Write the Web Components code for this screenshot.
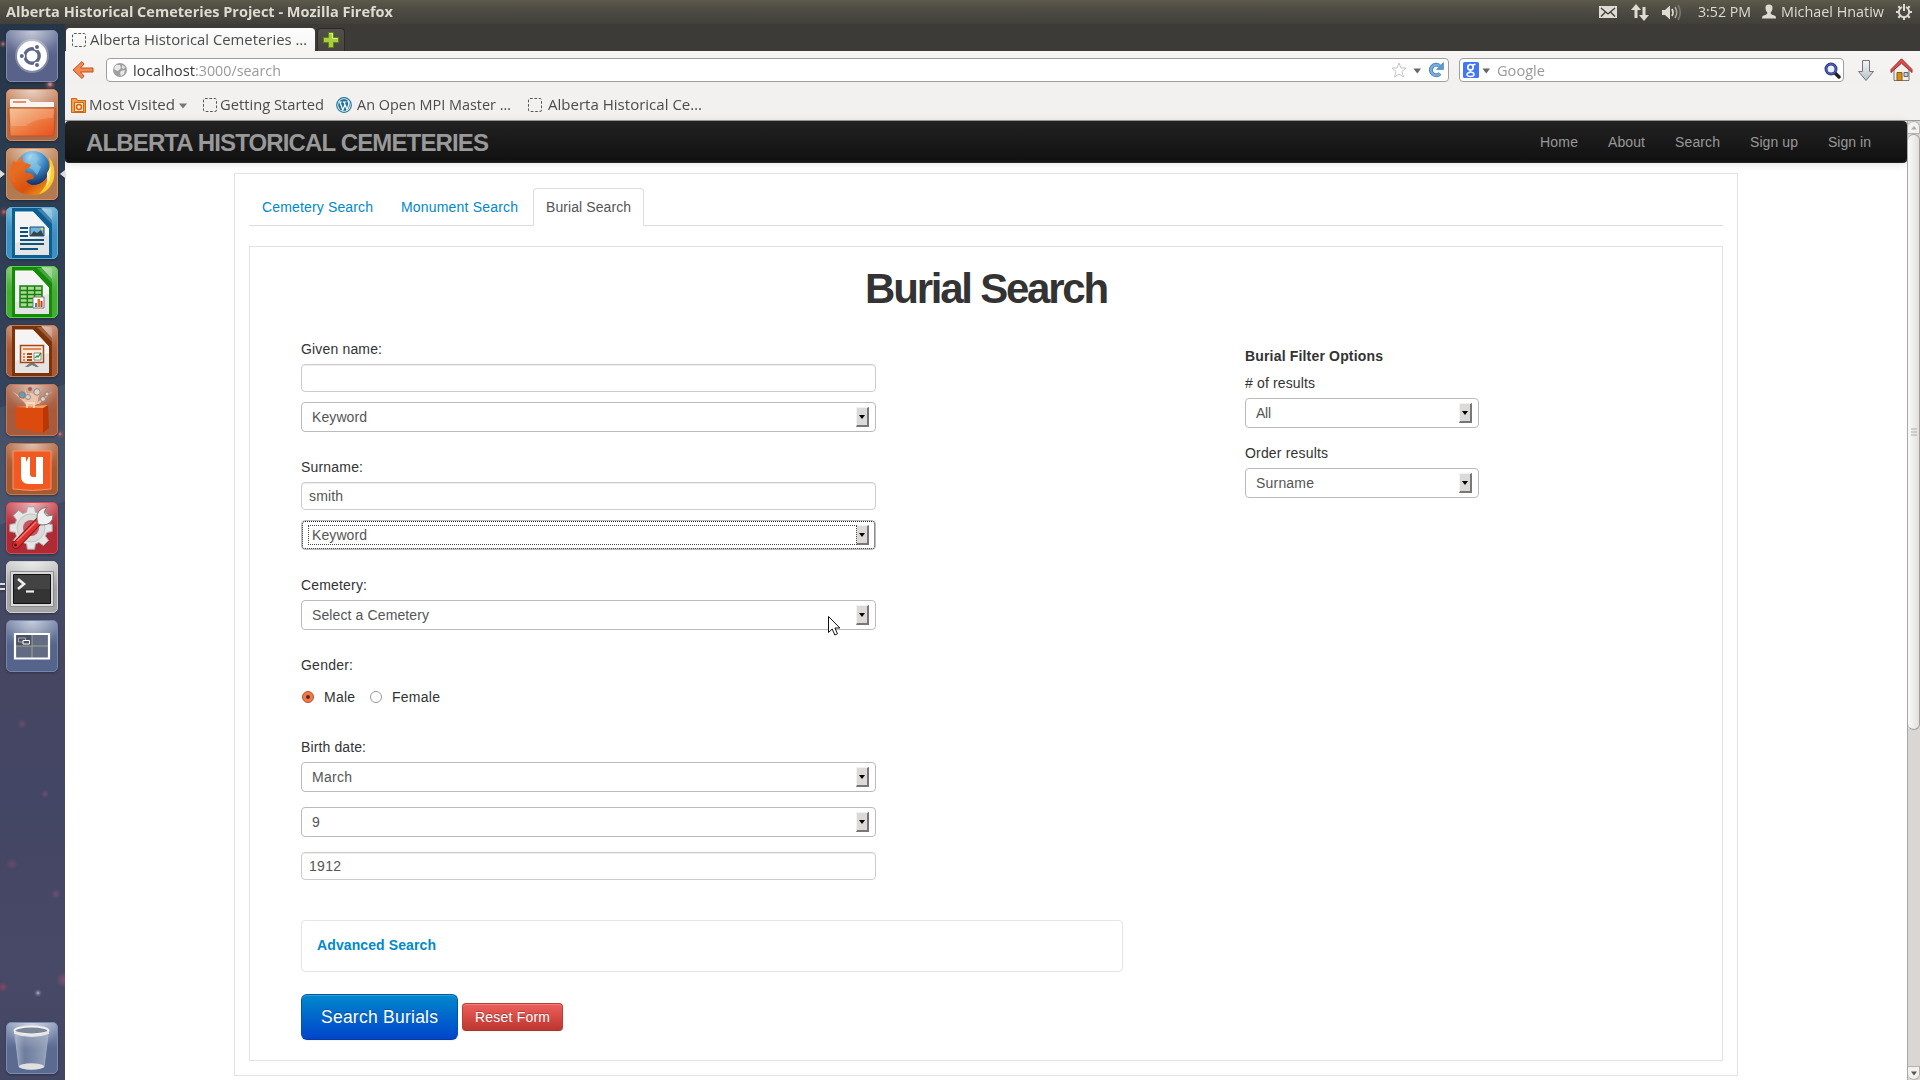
<!DOCTYPE html>
<html lang="en">
<head>
<meta charset="utf-8">
<title>Alberta Historical Cemeteries Project</title>
<style>
html,body{margin:0;height:100%;overflow:hidden;background:#fff}
</style>
</head>
<body>
<desktop-screen></desktop-screen>
<script>
const define = (name, html, ready) => {
  const tpl = document.createElement('template');
  tpl.innerHTML = html;
  customElements.define(name, class extends HTMLElement {
    connectedCallback() {
      if (this.shadowRoot) return;
      this.attachShadow({mode: 'open'}).append(tpl.content.cloneNode(true));
      if (ready) ready(this, this.shadowRoot);
    }
  });
};

/* Text run of a given width: letter spacing by default, horizontal scale with "scale". */
define('fit-text', `<style>:host{display:inline-block;white-space:pre;flex:none}span{display:inline-block;transform-origin:0 50%}</style><span><slot></slot></span>`, (el, root) => {
  const span = root.querySelector('span'), w = +el.getAttribute('w');
  const nat = span.getBoundingClientRect().width;
  if (!w || !nat) return;
  el.style.width = w + 'px';
  if (el.hasAttribute('scale')) { span.style.transform = `scaleX(${w / nat})`; span.style.marginRight = (w - nat) + 'px'; }
  else span.style.letterSpacing = (w - nat) / (el.textContent.length - 1) + 'px';
});

/* ---------- launcher ---------- */
const tile = (id, a, b, edge) => `<defs><linearGradient id="${id}" x2="0" y2="1"><stop offset="0" stop-color="${a}"/><stop offset=".5" stop-color="${b}"/><stop offset="1" stop-color="${b}"/></linearGradient><radialGradient id="s${id}" cx=".5" cy="0" r=".55"><stop offset="0" stop-color="#fff" stop-opacity=".55"/><stop offset="1" stop-color="#fff" stop-opacity="0"/></radialGradient></defs><rect x=".5" y=".5" width="51" height="51" rx="4.5" fill="url(#${id})" stroke="${edge}"/><rect x="1" y="1" width="50" height="50" rx="4" fill="url(#s${id})"/>`;
const doc = (c, inner) => `<path d="M6 1h29l11 12v38H6z" fill="${c}"/><path d="M31 2l15 15V4q0-2-2-2z" fill="#fff" opacity=".22"/><path d="M9 5h18l16 17v26H9z" fill="#f4f4f4"/><path d="M9 5h18l16 17" fill="none" stroke="#fff"/><path d="M9 36l34-8v20H9z" fill="#d8d8d8" opacity=".6"/>${inner}`;
const gearPath = (() => {
  let d = '';
  for (let i = 0; i < 8; i++) {
    const a = i * Math.PI / 4 - .17, p = (r, t) => (25 + r * Math.cos(t)).toFixed(1) + ' ' + (26 + r * Math.sin(t)).toFixed(1);
    d += (i ? 'L' : 'M') + p(16.5, a - .1) + 'L' + p(21.5, a) + 'L' + p(21.5, a + .34) + 'L' + p(16.5, a + .44);
  }
  return d + 'z';
})();
const icons = {
  dash: tile('d', '#7d87a8', '#59638a', '#7f8bb0') + `<circle cx="26" cy="26" r="17" fill="#fff" opacity=".25"/><circle cx="26" cy="26" r="15" fill="#fff"/><circle cx="26" cy="26" r="7.2" fill="none" stroke="#5d6789" stroke-width="3.4"/><g fill="#5d6789" stroke="#fff" stroke-width="1.2"><circle cx="15.8" cy="26" r="2.6"/><circle cx="31" cy="17.1" r="2.6"/><circle cx="31" cy="34.9" r="2.6"/></g>`,
  files: tile('f', '#d29a78', '#b16a48', '#d78a5c') + `<defs><linearGradient id="ff" x2="1" y2="1"><stop offset="0" stop-color="#f3b883"/><stop offset=".5" stop-color="#ee8046"/><stop offset="1" stop-color="#e84f1c"/></linearGradient></defs><path d="M4 18v-7q0-1 1-1h17l3 3h22q1 0 1 1v4z" fill="#f8f4f2"/><path d="M7 12h13v2H7z" fill="#ee8e66"/><path d="M3 19h46l-1 27q0 1-1 1H5q-1 0-1-1z" fill="url(#ff)" stroke="#b65024" stroke-width=".8"/><path d="M4 20h44l-1 9q-20 1-27 8H5z" fill="#fff" opacity=".17"/>`,
  fox: tile('x', '#c68e66', '#b17a50', '#d39164') + `<defs><radialGradient id="gb" cx=".45" cy=".2" r=".8"><stop offset="0" stop-color="#b7e0f4"/><stop offset=".5" stop-color="#3c8bc5"/><stop offset="1" stop-color="#132f66"/></radialGradient><linearGradient id="fx" x2="1" y2="1"><stop offset="0" stop-color="#f08030"/><stop offset=".6" stop-color="#d8520f"/><stop offset="1" stop-color="#f7b91f"/></linearGradient></defs><circle cx="27" cy="20" r="17" fill="url(#gb)"/><path d="M27 7l6 3-3 5 5 4-4 8-5-6-5-2 2-7z" fill="#85c4e6" opacity=".7"/><path d="M43 10q7 9 5 20c-2 12-12 18-22 17-14 0-23-9-23-21 0-6 3-11 5-14l1 4q2-5 8-7-1 4 1 6 4 0 7 2-1 3-5 4-2 2 0 4 3-1 6 1 3 2 1 5-4 0-7 2 6 7 14 3 8-5 9-14 1-6 0-12z" fill="url(#fx)"/><path d="M43 9q7 9 5 21c-2 8-8 14-15 16 6-6 9-12 9-20 2-5 2-10 1-17z" fill="#f9cd34"/><path d="M41 25l4-7-1 14-4 7 1-5z" fill="#fff0a0"/><path d="M7 13q4 3 12 1l-9 10q-4 5 1 12-7-5-7-13 1-6 3-10z" fill="#e96b23"/>`,
  writer: tile('w', '#68aed2', '#3e8fbf', '#5cb0df') + doc('#0b5f93', `<g stroke="#10527f" stroke-width="2"><path d="M14 21h8M14 25h8M14 29h8M14 33h24M14 37h24M14 42h18"/></g><path d="M24 20h14v9H24z" fill="#73b5dc" stroke="#10527f"/><path d="M24 29l4-5 3 2 4-3 3 6z" fill="#36464e"/><circle cx="36" cy="22" r="1.2" fill="#f6d743"/>`),
  calc: tile('c', '#7cc46e', '#46ab35', '#5bd14c') + doc('#148b08', `<path d="M14 20h22v21H14z" fill="#a9dc91"/><path d="M14 20h22v21H14zM14 24.500h22M14 28.500h22M14 32.500h22M14 36.500h22M21.300 20v21M28.600 20v21" fill="none" stroke="#1a7d13" stroke-width="1.500"/><path d="M27 31h11v11H27z" fill="#fff" stroke="#777"/><path d="M29 37h2v4h-2z" fill="#2688c9"/><path d="M31.500 33h2.500v8h-2.500z" fill="#e96c1b"/><path d="M34.500 35h2v6h-2z" fill="#c63c14"/>`),
  impress: tile('i', '#c28568', '#a65a37', '#cb7b50') + doc('#7e3207', `<path d="M14.500 20.500h23v17h-23z" fill="#f8e7dc" stroke="#a4481a" stroke-width="1.500"/><path d="M17 23h18v2H17z" fill="#e7874f"/><g stroke="#a4481a" stroke-width="2"><path d="M21 29h5M21 32h5M21 35h5"/><path d="M17 29h2M17 32h2M17 35h2" stroke="#e7874f"/></g><path d="M28 28h7v7h-7z" fill="#fff" stroke="#888"/><path d="M29 33l2-2 1 1 3-4" fill="none" stroke="#219a2e" stroke-width="1.300"/><path d="M24 38h4l5 4h-3l-4-2-4 2h-3z" fill="#777"/>`),
  shop: tile('h', '#b2745a', '#a65b3d', '#c47a5a') + `<g fill="#f4cdb5" opacity=".85"><path d="M25 20L6 7l14 13zM26 20L18 3l5 17zM27 20l9-17-6 17zM29 20L47 7 33 20z"/><circle cx="25" cy="16" r="7"/></g><g fill="#d9d2cd" stroke="#8b756c" stroke-width=".8"><circle cx="16" cy="11" r="3.200" fill="#6d99b2"/><circle cx="31" cy="8" r="3.200"/><circle cx="41" cy="10" r="2"/><circle cx="24" cy="5" r="1.800" fill="#c43"/><circle cx="37" cy="15" r="2.500"/><circle cx="22" cy="13" r="2.500"/></g><path d="M9 23l33-2 1 23-6 5-27-5z" fill="#dd4a0e"/><path d="M37 49l6-5-1-23-5 3z" fill="#b93707"/><path d="M9 23l33-2-5 3z" fill="#f9a36c"/><path d="M21 24v-5h7v5" fill="none" stroke="#f7d9bb" stroke-width="1.800"/>`,
  one: tile('u', '#b8734e', '#a65a30', '#cb7747') + `<path d="M7 8h38v38q-18 3-38 0z" fill="#f05a22" stroke="#ff9366"/><path d="M15 14h9v17q0 3 3 3h3V14h7v27H23q-8 0-8-8z" fill="#fff"/><path d="M19.500 14h3l-2 5z" fill="#f05a22"/>`,
  settings: tile('g', '#cc5963', '#ae2b36', '#d24b56') + `<path d="${gearPath}" fill="#e6e6e6" stroke="#a9a9a9"/><circle cx="25" cy="26" r="14" fill="#dadada" stroke="#c4c4c4"/><circle cx="25" cy="26" r="8" fill="#c45460"/><path d="M10 43L34 18" stroke="#8d1414" stroke-width="8" stroke-linecap="round"/><path d="M10 43L34 18" stroke="#dd3030" stroke-width="6" stroke-linecap="round"/><path d="M11 39L30 20" stroke="#f37b72" stroke-width="1.500"/><circle cx="9.500" cy="43" r="1.500" fill="#6a0909"/><path d="M31 17q-1-10 10-12l-3 5 3 4 6-1q0 10-11 10l-4-1z" fill="#f1f1f1" stroke="#777"/>`,
  term: tile('t', '#d2d2d2', '#a5a5a5', '#cfcfcf') + `<path d="M4.500 10.500h43v35h-43z" fill="#d9d9d9" stroke="#8c8c8c"/><path d="M7.500 13.500h37v29h-37z" fill="#343434" stroke="#111"/><path d="M8 14h36v14H8z" fill="#fff" opacity=".08"/><path d="M12 18l6 5-6 5" fill="none" stroke="#eee" stroke-width="2.600"/><path d="M20 30.500h8" stroke="#eee" stroke-width="2.200"/>`,
  work: tile('k', '#8090b0', '#55648a', '#7486ab') + `<path d="M9 14.500h34v23H9z" fill="#626c82"/><path d="M9 14.500h17V26H9z" fill="#4a5164"/><path d="M26 14.500v23M9 26h34" stroke="#a5a193"/><path d="M9 14h34v24.500H9z" fill="none" stroke="#fff" stroke-width="2.200"/><path d="M12.500 18h7v4h-7z" fill="none" stroke="#aaa"/><path d="M17 20.500h6.500V24H17z" fill="#4a5164" stroke="#fff"/>`,
  trash: tile('r', '#93a1bf', '#5a6a91', '#7a8cb4') + `<defs><linearGradient id="tr"><stop offset="0" stop-color="#b9c2d2" stop-opacity=".8"/><stop offset=".3" stop-color="#8490aa" stop-opacity=".5"/><stop offset="1" stop-color="#a9b4c8" stop-opacity=".8"/></linearGradient></defs><path d="M9 13h33l-4 32q-13 4-25 0z" fill="url(#tr)" stroke="#aab4c8" stroke-width=".8"/><ellipse cx="25.500" cy="44.500" rx="12.500" ry="3.200" fill="#dfe0df"/><ellipse cx="25.500" cy="8.500" rx="17" ry="4" fill="#7c879b" stroke="#f1f1ef" stroke-width="2"/><path d="M8 9q17 7 35 0v3q-17 6-35 0z" fill="#e6e6e4"/>`
};
customElements.define('launcher-icon', class extends HTMLElement {
  connectedCallback() {
    if (this.shadowRoot) return;
    this.attachShadow({mode: 'open'}).innerHTML = `<style>:host{display:block;width:52px;height:52px;position:relative;margin-left:6px;filter:drop-shadow(0 1px 1px #0005)}svg{display:block}.l,.r{position:absolute;top:20px}.l{left:-6px}.r{left:53px}</style><svg width="52" height="52" viewBox="0 0 52 52">${icons[this.getAttribute('name')]}</svg>${
      this.hasAttribute('active') ? '<svg class="l" width="6" height="12"><path d="M0 2l5 4-5 4z" fill="#ddd"/></svg><svg class="r" width="6" height="12"><path d="M6 2L1 6l5 4z" fill="#ddd"/></svg>' : ''}${
      this.hasAttribute('running') ? '<svg class="l" width="6" height="12"><path d="M0 3h5M0 8h5" stroke="#ddd" stroke-width="2"/></svg>' : ''}`;
  }
});
define('side-launcher', `<style>
:host{display:flex;flex-direction:column;box-sizing:border-box;width:65px;height:1056px;padding-top:6px;padding-bottom:6px;gap:7px;
background:
radial-gradient(circle at 3px 20px,#b78 0,#a666 2px,transparent 4px),
radial-gradient(circle at 50px 60px,#eaa 0,#c666 3px,transparent 6px),
radial-gradient(circle at 4px 188px,#c66 0,#a444 3px,transparent 6px),
radial-gradient(circle at 60px 410px,#d88 0,#b555 2px,transparent 5px),
radial-gradient(circle at 38px 969px,#9cb7cc 0,#89a6 2px,transparent 4px),
radial-gradient(circle at 3px 963px,#a46a 0,transparent 5px),
radial-gradient(circle at 64px 956px,#b3568388 0,transparent 8px),
radial-gradient(circle at 22px 700px,#a4567966 0,transparent 5px),
radial-gradient(circle at 45px 770px,#b0608066 0,transparent 4px),
radial-gradient(circle at 12px 840px,#a0507066 0,transparent 6px),
radial-gradient(circle at 56px 870px,#a5608866 0,transparent 5px),
linear-gradient(160deg,transparent 0 360px,#ffffff10 361px 470px,transparent 471px),
linear-gradient(#263647 0,#2c3c50 140px,#34425a 350px,#434c66 520px,#474662 640px,#434664 760px,#454764 860px,#484966 940px,#424662 1056px)}
launcher-icon:last-child{margin-top:auto}
</style>
<launcher-icon name="dash"></launcher-icon><launcher-icon name="files"></launcher-icon><launcher-icon name="fox" active></launcher-icon><launcher-icon name="writer"></launcher-icon><launcher-icon name="calc"></launcher-icon><launcher-icon name="impress"></launcher-icon><launcher-icon name="shop"></launcher-icon><launcher-icon name="one"></launcher-icon><launcher-icon name="settings"></launcher-icon><launcher-icon name="term" running></launcher-icon><launcher-icon name="work"></launcher-icon><launcher-icon name="trash"></launcher-icon>`);

/* ---------- top panel ---------- */
define('top-panel', `<style>
:host{display:flex;align-items:center;height:24px;box-sizing:border-box;padding:0 7px 0 6px;background:linear-gradient(#5d5a4c 0,#504e44 8px,#403f3a 24px);color:#dfdbd2;font:15px/22px "Open Sans","Noto Sans",sans-serif}
fit-text{padding-bottom:2px}.t{font-weight:700;margin-right:auto}svg{flex:none}</style>
<fit-text class="t" w="387" scale>Alberta Historical Cemeteries Project - Mozilla Firefox</fit-text>
<svg width="18" height="24" style="margin-right:14px"><path d="M0 6h18v12H0z" fill="#dfdbd2"/><path d="M2 8l7 6 7-6M2 16.500l5-5M16 16.500l-5-5" stroke="#3c3b37" stroke-width="1.300" fill="none"/></svg>
<svg width="18" height="24" style="margin-right:13px"><path d="M5 4l5 6H6.500v8h-3v-8H0z" fill="#dfdbd2"/><path d="M13 21l-5-6h3.500V7h3v8H18z" fill="#dfdbd2"/></svg>
<svg width="21" height="24" style="margin-right:15px"><path d="M0 10h3l5-4.500v14L3 15H0z" fill="#dfdbd2"/><path d="M10 9q2 3.500 0 7" stroke="#dfdbd2" stroke-width="1.700" fill="none"/><path d="M13 7q3.500 5.500 0 11" stroke="#aaa69e" stroke-width="1.700" fill="none"/><path d="M16 5q4.500 7.500 0 15" stroke="#7b7972" stroke-width="1.600" fill="none"/></svg>
<fit-text w="53" scale>3:52 PM</fit-text>
<svg width="14" height="24" style="margin:0 5px 0 11px"><path d="M7 4.500c-2.500 0-3.800 1.500-3.500 4 .2 2 1 3.300 1.800 4q.2 1.500-1 2L.500 16Q0 18 0 18.500h14q0-1.500-.5-2.500l-3.800-1.500q-1.200-.500-1-2c.8-.7 1.600-2 1.800-4 .3-2.500-1-4-3.500-4z" fill="#dfdbd2"/></svg>
<fit-text w="103" scale>Michael Hnatiw</fit-text>
<svg width="18" height="24" viewBox="-9 -12 18 24" style="margin-left:11px"><path d="M-2-4.800A5.200 5.200 0 1 0 2-4.800M0-8v7" stroke="#dfdbd2" stroke-width="2" fill="none"/><path d="M-8 0h3M5 0h3M0 5v3M-5.700-5.700l2 2M5.700-5.700l-2 2M-5.700 5.700l2-2M5.700 5.700l-2-2" stroke="#dfdbd2" stroke-width="2"/></svg>`);

/* ---------- browser chrome ---------- */
define('dashed-icon', `<style>:host{display:block;flex:none;width:14px;height:14px}svg{display:block}</style><svg width="14" height="14"><rect x=".5" y=".5" width="13" height="13" rx="1.500" fill="none" stroke="#555" stroke-dasharray="2.700 1.700"/></svg>`);
define('tab-strip', `<style>
:host{display:flex;height:27px;box-sizing:border-box;align-items:flex-end;background:#3c3b37;padding-left:1px;gap:2px;font:14.500px/22px "Open Sans","Noto Sans",sans-serif;color:#4c4c4c}
.tab{display:flex;align-items:center;gap:4px;width:249px;height:23px;box-sizing:border-box;padding-left:6px;background:linear-gradient(#fdfdfd,#f5f4f3);border-radius:4px 4px 0 0}
.new{width:28px;height:23px;box-sizing:border-box;background:linear-gradient(#504f49,#45443f);border:1px solid #2c2b28;border-bottom:0;border-radius:4px 4px 0 0;display:flex;justify-content:center;align-items:center}</style>
<div class="tab"><dashed-icon></dashed-icon><fit-text w="217" scale>Alberta Historical Cemeteries …</fit-text></div>
<div class="new"><svg width="16" height="16"><path d="M5.500.500h5v5h5v5h-5v5h-5v-5h-5v-5h5z" fill="#a9cd3c" stroke="#5c8414"/><path d="M6.500 1.500h3v5h5" fill="none" stroke="#dcef9a"/></svg></div>`);
define('nav-toolbar', `<style>
:host{display:flex;align-items:center;height:33px;box-sizing:border-box;background:linear-gradient(#f6f5f4,#f1f0ef);padding:7px 6px 2px 7px;font:14.500px/22px "Open Sans","Noto Sans",sans-serif;color:#3c3c3c}
svg{flex:none;display:block}
.box{display:flex;align-items:center;height:24px;box-sizing:border-box;border:1px solid #a19f9b;border-radius:4px;background:#fff}
.box fit-text{padding-top:1px}
.url{width:1343px;margin-left:12px;padding:0 4px 0 6px}.srch{width:385px;margin-left:10px;padding:0 2px 0 3px}
.g{color:#999}</style>
<svg width="22" height="20"><path d="M10 1.500L1 10l9 8.500 2-2.500-3.500-4H21V8H8.500L12 4z" fill="#f08a4f" stroke="#c4501d" stroke-linejoin="round"/></svg>
<div class="box url"><svg width="14" height="14" style="margin-right:6px"><circle cx="7" cy="7" r="7" fill="#a0a0a0"/><path d="M3 2l4 0 1 3-3 3-3-1-1-2zM8 8l4-1-1 4-3 2-1-3zM9 2l3 2-1 2-2-1z" fill="#e8e8e8"/></svg><fit-text w="62" scale>localhost</fit-text><fit-text class="g" w="86" scale>:3000/search</fit-text>
<svg width="16" height="16" style="margin-left:auto"><path d="M8 1l2 5h5l-4 3.500 1.500 5.500L8 12l-4.500 3L5 9.500 1 6h5z" fill="#fff" stroke="#c5c5c5" stroke-linejoin="round"/></svg><svg width="9" height="6" style="margin:1px 6px 0"><path d="M.500.500h7.500L4.300 5.500z" fill="#666"/></svg><svg width="16" height="16"><path d="M12 11.500A5.200 5.200 0 1 1 11.500 4" fill="none" stroke="#3f7db8" stroke-width="4"/><path d="M12 11.500A5.200 5.200 0 1 1 11.500 4" fill="none" stroke="#78aedb" stroke-width="2.400"/><path d="M8.500 7.500H15.500V.500z" fill="#5a98cd" stroke="#3f7db8" stroke-width=".6"/></svg></div>
<div class="box srch"><svg width="16" height="16"><rect width="16" height="16" rx="1.500" fill="#4376f6"/><circle cx="7.500" cy="5.200" r="2.700" fill="none" stroke="#fff" stroke-width="1.700"/><path d="M8 8Q6 9 8 10q3 .500 3 2.500 0 2-3.500 2T4 12.500q0-2 3.500-2.300M9.500 3l3-.800" fill="none" stroke="#fff" stroke-width="1.400"/></svg><svg width="9" height="6" style="margin:1px 6px 0 3px"><path d="M.500.500h7.500L4.300 5.500z" fill="#666"/></svg><fit-text class="g" w="48" scale>Google</fit-text>
<svg width="17" height="17" style="margin-left:auto"><path d="M11 11l4 4" stroke="#222" stroke-width="3.500" stroke-linecap="round"/><circle cx="7" cy="7" r="5" fill="#e9f0f8" stroke="#2c3590" stroke-width="3"/><circle cx="7" cy="7" r="5" fill="none" stroke="#6f7fd0" stroke-width=".7"/></svg></div>
<svg width="18" height="23" style="margin-left:13px"><defs><linearGradient id="a" x2="0" y2="1"><stop offset="0" stop-color="#f4f4f4"/><stop offset="1" stop-color="#b8c2c8"/></linearGradient></defs><path d="M5.500 1.500h7v11h4L9 21.500 1.500 12.500h4z" fill="url(#a)" stroke="#777" stroke-linejoin="round"/></svg>
<svg width="23" height="24" style="margin-left:15px"><path d="M4 12v10.500h15V12l-7.500-7z" fill="#f0efeb" stroke="#777"/><path d="M7 14.500h5v8H7z" fill="#d68e1a" stroke="#8c5b0d"/><path d="M14 14.500h4v4h-4z" fill="#b8cfe3" stroke="#666"/><path d="M11.500.800L1 11.500v3l10.500-9.500L22 14.500v-3z" fill="#dc4d4d" stroke="#a22b2b" stroke-linejoin="round"/></svg>`);
define('bookmark-bar', `<style>
:host{display:flex;align-items:center;height:37px;box-sizing:border-box;padding:6px 0 0 6px;background:#f2f1f0;border-bottom:1px solid #9c9a97;font:14.500px/22px "Open Sans","Noto Sans",sans-serif;color:#4c4c4c}
svg{flex:none}</style>
<svg width="16" height="16"><path d="M.500 1.500h5l1 2h8v12H.500z" fill="#f0a04c" stroke="#cf6510"/><path d="M3.500 5.500h9v9h-9z" fill="#fbe0c0" stroke="#cf6510"/><circle cx="8" cy="10" r="2.500" fill="none" stroke="#cf6510" stroke-width="1.400"/></svg>
<fit-text w="86" scale style="margin-left:2px">Most Visited</fit-text><svg width="8" height="6" style="margin:1px 16px 0 4px"><path d="M0 .500h8L4 5.500z" fill="#777"/></svg>
<dashed-icon></dashed-icon><fit-text w="104" scale style="margin:0 12px 0 3px">Getting Started</fit-text>
<svg width="16" height="16"><circle cx="8" cy="8" r="7.300" fill="#fff" stroke="#21759b" stroke-width="1.200"/><circle cx="8" cy="8" r="5.900" fill="#21759b"/><path d="M2.800 5h3M6.800 5h3.500M3.800 5l3 8 2-5M8 5l3 7.500L13 7q0-2-1.500-3" fill="none" stroke="#fff" stroke-width="1.200"/></svg>
<fit-text w="154" scale style="margin:0 17px 0 5px">An Open MPI Master …</fit-text>
<dashed-icon></dashed-icon><fit-text w="154" scale style="margin-left:6px">Alberta Historical Ce…</fit-text>`);
define('scroll-bar', `<style>
:host{display:flex;flex-direction:column;width:13px;height:959px;box-sizing:border-box;border-left:1px solid #a9a6a2;background:#d9d6d4}
div{box-sizing:border-box;display:flex;align-items:center;justify-content:center}
.b{height:14px;border:1px solid #b5b1ad;border-left:0;background:#f2f1f0}.u{border-radius:7px 7px 0 0;height:13px}.d{border-radius:0 0 7px 7px;margin-top:auto}
.th{height:596px;border:1px solid #a19d99;border-left:0;border-radius:7px;background:linear-gradient(90deg,#fafafa,#e2e0de)}</style>
<div class="b u"><svg width="8" height="5"><path d="M1 4.500L4 1l3 3.500z" fill="#aaa"/></svg></div><div class="th"><svg width="6" height="9"><path d="M0 1h6M0 4h6M0 7h6" stroke="#aaa"/></svg></div><div class="b d"><svg width="8" height="5"><path d="M1 .500h6L4 4.500z" fill="#555"/></svg></div>`);

/* ---------- web page ---------- */
define('site-nav', `<style>
:host{display:flex;align-items:center;height:42px;box-sizing:border-box;padding:0 36px 0 21px;background:linear-gradient(#222,#111);border-radius:4px;border-bottom:1px solid #252525;box-shadow:0 1px 8px #0000001f;color:#999;font:14px/20px "Liberation Sans",Arial,sans-serif}
.b{font:700 24px/28px "Liberation Sans",Arial,sans-serif;margin-right:auto;padding-top:2px}nav{display:flex;gap:30px;padding-top:1px}</style>
<fit-text class="b" w="403">ALBERTA HISTORICAL CEMETERIES</fit-text>
<nav><fit-text w="38">Home</fit-text><fit-text w="37">About</fit-text><fit-text w="45">Search</fit-text><fit-text w="48">Sign up</fit-text><fit-text w="43">Sign in</fit-text></nav>`);
define('tab-list', `<style>
:host{display:flex;height:38px;box-sizing:border-box;border-bottom:1px solid #ddd;color:#08c}
div{box-sizing:border-box;height:38px;padding:8px 12px;border:1px solid transparent;margin-right:2px;line-height:20px}
.on{color:#555;background:#fff;border-color:#ddd;border-bottom-color:#fff;border-radius:4px 4px 0 0}</style>
<div><fit-text w="111">Cemetery Search</fit-text></div><div><fit-text w="117">Monument Search</fit-text></div><div class="on"><fit-text w="85">Burial Search</fit-text></div>`);
define('text-field', `<style>:host{display:block;box-sizing:border-box;height:28px;border:1px solid #ccc;border-radius:4px;background:#fff;box-shadow:inset 0 1px 1px #00000013;color:#555;padding:3px 7px;line-height:20px}</style><slot></slot>`);
define('select-box', `<style>
:host{display:flex;position:relative;justify-content:space-between;box-sizing:border-box;height:30px;border:1px solid #bbb;border-radius:4px;background:#fff;color:#555;padding:4px 6px 4px 10px;line-height:20px}
i{width:13px;height:20px;box-sizing:border-box;background:#dcdad9;border:solid;border-width:1px 2px 2px 1px;border-color:#f2f2f2 #777 #777 #f2f2f2;display:flex;align-items:center;justify-content:center}
:host([focused]){outline:1px dotted #222;outline-offset:-2px}
:host([focused])::after{content:"";position:absolute;left:6px;right:18px;top:4px;bottom:4px;border:1px dotted #444}</style><slot></slot><i><svg width="6" height="4"><path d="M0 0h6L3 4z"/></svg></i>`);
define('radio-dot', `<style>:host{display:block;width:12px;height:12px}svg{display:block}circle.d{display:none}:host([checked]) .o{fill:#f07a4b;stroke:#b4522c}:host([checked]) .d{display:block}</style><svg width="12" height="12"><circle class="o" cx="6" cy="6" r="5.500" fill="#fff" stroke="#999"/><circle class="d" cx="6" cy="6" r="2" fill="#5a2a18"/></svg>`);
define('form-button', `<style>
:host{display:block;box-sizing:border-box;color:#fff;text-align:center;text-shadow:0 -1px 0 #00000040;box-shadow:inset 0 1px 0 #fff3,0 1px 2px #0000000d}
:host([kind=primary]){width:157px;height:46px;font-size:17.500px;line-height:44px;border:1px solid #0055a8;border-bottom-color:#003f9c;border-radius:6px;background:linear-gradient(#08c,#04c)}
:host([kind=danger]){width:101px;height:28px;font-size:14px;line-height:26px;border:1px solid #b8403b;border-bottom-color:#a23631;border-radius:4px;background:linear-gradient(#ee5f5b,#bd362f)}</style><slot></slot>`);
define('burial-form', `<style>
:host{display:block;width:575px}
label{display:block;height:25px;line-height:20px}
.group{display:flex;flex-direction:column}
.radios{display:flex;align-items:center;height:20px;margin-top:7px;padding-left:1px}
.radios radio-dot{margin-bottom:1px}
.adv{width:822px;height:52px;box-sizing:border-box;border:1px solid #e5e5e5;border-radius:4px;margin-top:40px;padding:14px 15px;line-height:20px;font-weight:700;color:#08c}
.btns{display:flex;align-items:center;gap:4px;margin-top:22px}</style>
<div class="group"><label><fit-text w="81">Given name:</fit-text></label><text-field></text-field><select-box style="margin-top:10px"><fit-text w="55">Keyword</fit-text></select-box></div>
<div class="group" style="margin-top:25px"><label><fit-text w="62">Surname:</fit-text></label><text-field><fit-text w="34">smith</fit-text></text-field><select-box focused style="margin-top:10px"><fit-text w="55">Keyword</fit-text></select-box></div>
<div class="group" style="margin-top:25px"><label><fit-text w="66">Cemetery:</fit-text></label><select-box><fit-text w="117">Select a Cemetery</fit-text></select-box></div>
<div class="group" style="margin-top:25px"><label><fit-text w="52">Gender:</fit-text></label><div class="radios"><radio-dot checked></radio-dot><fit-text w="31" style="margin:0 15px 0 10px">Male</fit-text><radio-dot></radio-dot><fit-text w="48" style="margin-left:10px">Female</fit-text></div></div>
<div class="group" style="margin-top:30px"><label><fit-text w="65">Birth date:</fit-text></label><select-box><fit-text w="40">March</fit-text></select-box><select-box style="margin-top:15px"><span>9</span></select-box><text-field style="margin-top:15px"><fit-text w="32">1912</fit-text></text-field></div>
<div class="adv"><fit-text w="119">Advanced Search</fit-text></div>
<div class="btns"><form-button kind="primary"><fit-text w="117">Search Burials</fit-text></form-button><form-button kind="danger"><fit-text w="75">Reset Form</fit-text></form-button></div>`);
define('filter-options', `<style>
:host{display:block;width:234px;padding-top:7px}label,b{display:block;line-height:20px}b{height:27px}label{height:25px}</style>
<b><fit-text w="138">Burial Filter Options</fit-text></b><label><fit-text w="70">#&nbsp;of results</fit-text></label><select-box><fit-text w="15">All</fit-text></select-box><label style="margin-top:15px"><fit-text w="83">Order results</fit-text></label><select-box><fit-text w="58">Surname</fit-text></select-box>`);
define('search-page', `<style>
:host{display:flex;flex-direction:column;width:1842px;height:959px;color:#333;font:14px/20px "Liberation Sans",Arial,sans-serif;background:#fff}
.outer{width:1504px;height:903px;box-sizing:border-box;margin:10px 0 0 169px;border:1px solid #e3e3e3;padding:14px}
.inner{height:815px;box-sizing:border-box;border:1px solid #e3e3e3;margin-top:20px}
h1{margin:20px 0 0;text-align:center;font-size:42px;line-height:44px;height:72px}
.cols{display:flex;justify-content:space-between;padding:0 243px 0 51px}</style>
<site-nav></site-nav>
<div class="outer"><tab-list></tab-list><div class="inner"><h1><fit-text w="244">Burial Search</fit-text></h1><div class="cols"><burial-form></burial-form><filter-options></filter-options></div></div></div>`);
define('desktop-screen', `<style>
:host{display:flex;flex-direction:column;position:relative;width:1920px;height:1080px;overflow:hidden}
.row{display:flex}.win{width:1855px}
.cur{position:absolute;left:827px;top:615px}</style>
<top-panel></top-panel>
<div class="row"><side-launcher></side-launcher><div class="win"><tab-strip></tab-strip><nav-toolbar></nav-toolbar><bookmark-bar></bookmark-bar><div class="row"><search-page></search-page><scroll-bar></scroll-bar></div></div></div>
<svg class="cur" width="15" height="22"><path d="M1.500 1.500v16l3.700-3.500 2.600 6 2.700-1.200-2.600-5.800h5z" fill="#fff" stroke="#111"/></svg>`);
</script>
</body>
</html>
